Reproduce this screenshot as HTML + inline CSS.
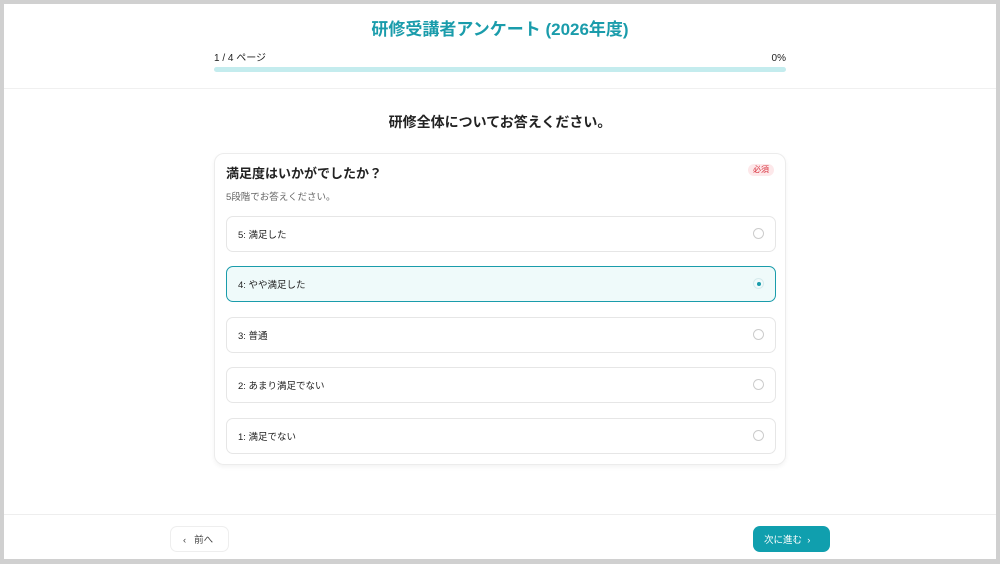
<!DOCTYPE html>
<html><head><meta charset="utf-8"><style>
*{box-sizing:border-box;margin:0;padding:0}
html,body{width:1000px;height:564px;overflow:hidden;background:#d0d0d0;font-family:"Liberation Sans","Noto Sans CJK JP",sans-serif;color:#222}
div,span{line-height:1}
.frame{position:absolute;left:4px;top:4px;width:992px;height:555px;background:#fff}
.title{position:absolute;top:17px;left:0;width:992px;text-align:center;color:#1a9cab;font-size:17px;font-weight:bold}
.pl{position:absolute;top:50px;left:210px;font-size:10px;color:#222}
.pr{position:absolute;top:50px;right:210px;font-size:10px;color:#222}
.bar{position:absolute;top:63px;left:210px;width:572px;height:5px;border-radius:3px;background:#c4ecee}
.hsep{position:absolute;top:84px;left:0;width:992px;height:1px;background:#f0f0f0}
.h2{position:absolute;top:111px;left:0;width:992px;text-align:center;font-size:14px;font-weight:bold}
.card{position:absolute;left:210px;top:149px;width:572px;height:312px;border:1px solid #ececec;border-radius:10px;box-shadow:0 2px 5px rgba(0,0,0,.05)}
.q{position:absolute;left:11px;top:13px;font-size:13px;font-weight:bold}
.req{position:absolute;right:11px;top:10px;background:#fde8ea;color:#d8323e;font-size:8px;padding:2px 5px;border-radius:8px}
.sub{position:absolute;left:11px;top:39px;font-size:9.5px;color:#666}
.opt{position:absolute;left:11px;width:550px;height:36px;border:1px solid #e6e6e6;border-radius:7px;font-size:9.5px;padding-left:11px;padding-top:3px;display:flex;align-items:center}
.opt .r{position:absolute;right:11px;top:11px;width:11px;height:11px;border:1px solid #ccc;border-radius:50%}
.opt.sel{background:#effafa;border-color:#1a9cab}
.opt.sel .r{border-color:#d6eaec}
.opt.sel .r:after{content:"";position:absolute;left:2.5px;top:2.5px;width:4px;height:4px;border-radius:50%;background:#1a9cab}
.fsep{position:absolute;top:510px;left:0;width:992px;height:1px;background:#eee}
.prev{position:absolute;left:166px;top:522px;width:59px;height:26px;border:1px solid #eee;border-radius:7px;font-size:9.5px;color:#444;display:flex;align-items:center;padding-left:12px;padding-top:3px}
.next{position:absolute;left:749px;top:522px;width:77px;height:26px;background:#109fae;border-radius:7px;font-size:9.5px;color:#fff;display:flex;align-items:center;padding-left:11px;padding-top:3px}
</style></head><body><div class="frame">
<div class="title">研修受講者アンケート (2026年度)</div>
<div class="pl">1 / 4 ページ</div><div class="pr">0%</div>
<div class="bar"></div><div class="hsep"></div>
<div class="h2">研修全体についてお答えください。</div>
<div class="card">
<div class="q">満足度はいかがでしたか？</div><div class="req">必須</div>
<div class="sub">5段階でお答えください。</div>
<div class="opt" style="top:62px">5: 満足した<span class="r"></span></div>
<div class="opt sel" style="top:112px">4: やや満足した<span class="r"></span></div>
<div class="opt" style="top:163px">3: 普通<span class="r"></span></div>
<div class="opt" style="top:213px">2: あまり満足でない<span class="r"></span></div>
<div class="opt" style="top:264px">1: 満足でない<span class="r"></span></div>
</div>
<div class="fsep"></div>
<div class="prev">‹&nbsp;&nbsp; 前へ</div>
<div class="next">次に進む &nbsp;›</div>
</div></body></html>
